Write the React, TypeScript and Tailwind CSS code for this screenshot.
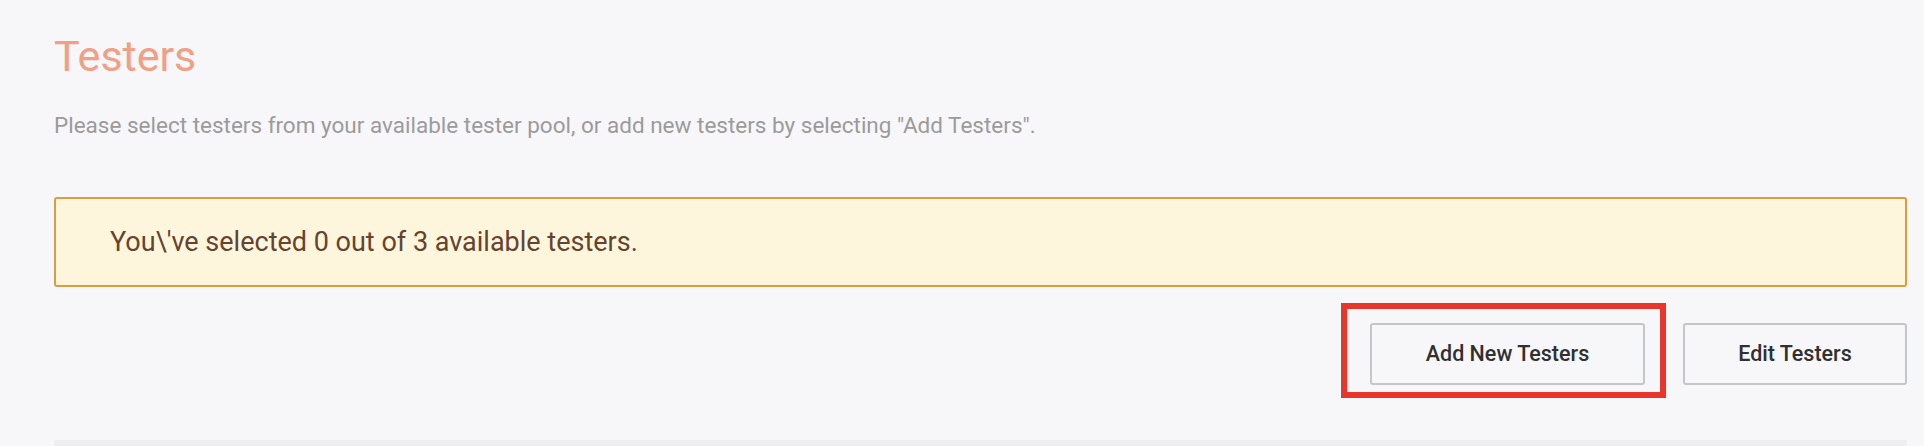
import React from 'react'

const Button = ({ children, className = '' }: { children: React.ReactNode; className?: string }) => (
  <button
    className={`h-[62px] rounded-[3px] border-2 border-[#c4c6cc] bg-[#f7f7f9] text-[21.5px] font-medium text-[#303030] ${className}`}
  >
    {children}
  </button>
)

export default function App() {
  return (
    <div
      className="min-h-[446px] w-full overflow-hidden bg-[#f7f7f9] pl-[54px] pr-[17px]"
      style={{ fontFamily: 'Roboto, "Liberation Sans", sans-serif' }}
    >
      <h1 className="pt-[30px] text-[43px] leading-[52px] font-normal text-[#f0a086]">Testers</h1>
      <p className="mt-[28px] text-[22.5px] leading-[30px] text-[#9b9b9b]">
        Please select testers from your available tester pool, or add new testers by selecting "Add Testers".
      </p>
      <div className="mt-[57px] flex h-[90px] items-center rounded-[3px] border-2 border-[#dc9d3c] bg-[#fdf6dd] pl-[54px]">
        <span className="text-[27px] text-[#66432f]">You\'ve selected 0 out of 3 available testers.</span>
      </div>
      <div className="mt-[36px] flex justify-end gap-[38px]">
        <div className="relative">
          <Button className="w-[275px]">Add New Testers</Button>
          <div className="pointer-events-none absolute -top-[20px] -left-[29px] -right-[21px] -bottom-[13px] border-[6px] border-[#e8362a]" />
        </div>
        <Button className="w-[224px]">Edit Testers</Button>
      </div>
      <div className="mt-[55px] h-[8px] bg-[#eeeef0]" />
    </div>
  )
}
